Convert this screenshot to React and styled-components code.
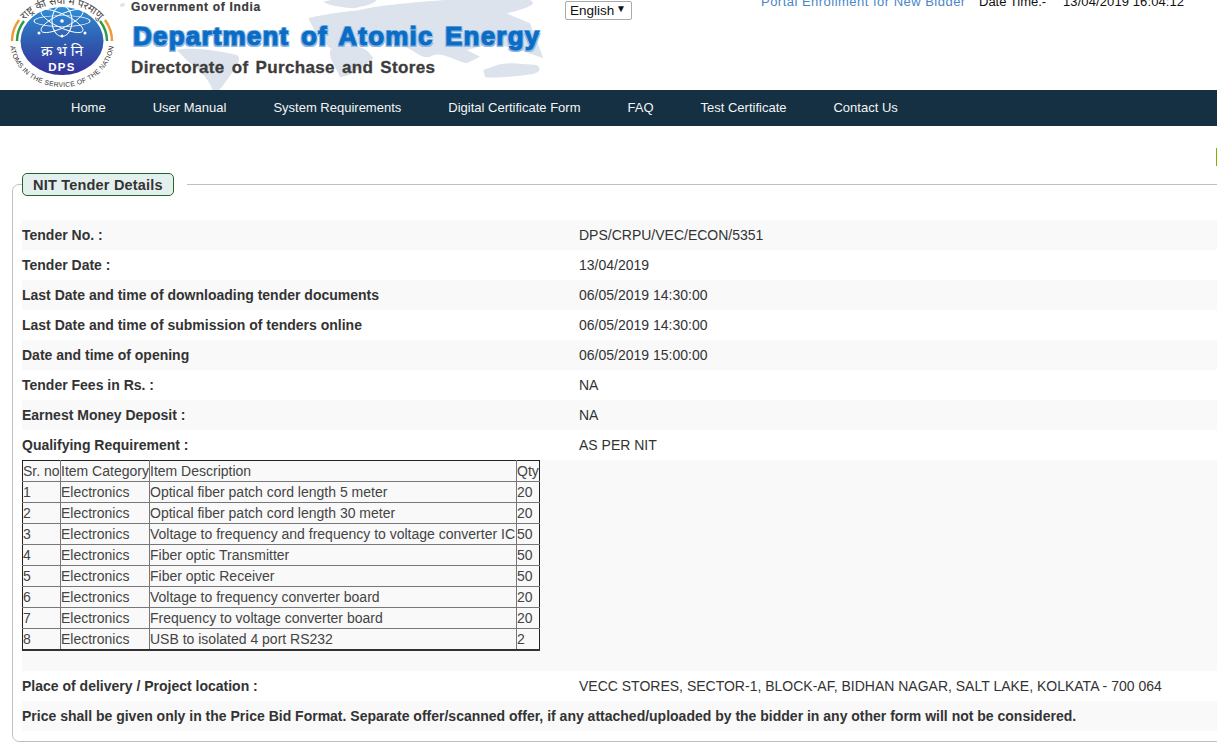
import React from 'react';
import styled, { createGlobalStyle } from 'styled-components';

const GlobalStyle = createGlobalStyle`
  html, body {
    margin: 0;
    padding: 0;
    background: #fff;
    overflow: hidden;
    height: 756px;
    font-family: "Liberation Sans", Arial, sans-serif;
  }
`;

const Header = styled.header`
  position: relative;
  display: flex;
  height: 90px;
  overflow: hidden;
`;

const MapArt = styled.svg`
  position: absolute;
  left: 120px;
  top: 0;
  z-index: 0;
`;

const Logo = styled.svg`
  flex: none;
  margin-left: 8px;
  z-index: 1;
`;

const TitleBlock = styled.div`
  flex: none;
  width: 430px;
  margin-left: 16px;
  z-index: 1;
`;

const GovLine = styled.div`
  font-size: 12px;
  font-weight: bold;
  letter-spacing: 0.7px;
  line-height: 14px;
  color: #3a3a3a;
  -webkit-text-stroke: 0.2px #3a3a3a;
`;

const DeptLine = styled.div`
  margin: 6px 0 0 2px;
  font-size: 26px;
  font-weight: bold;
  line-height: 32px;
  letter-spacing: 1.2px;
  word-spacing: 3px;
  white-space: nowrap;
  color: #0a6cc4;
  -webkit-text-stroke: 1px #0a6cc4;
  text-shadow: 1.5px 1.5px 0 #8fb9e4, -1.5px -1.5px 0 #a9cdec, 1.5px -1.5px 0 #a9cdec, -1.5px 1.5px 0 #8fb9e4;
`;

const StoreLine = styled.div`
  margin-top: 6px;
  font-size: 17px;
  font-weight: bold;
  line-height: 20px;
  letter-spacing: 0.35px;
  word-spacing: 2px;
  white-space: nowrap;
  color: #3c3c3c;
  -webkit-text-stroke: 0.3px #3c3c3c;
`;

const LangSelect = styled.div`
  flex: none;
  display: flex;
  align-items: center;
  justify-content: space-between;
  box-sizing: border-box;
  width: 67px;
  height: 19px;
  margin: 1px 0 0 4px;
  padding: 0 5px 0 4px;
  border: 1px solid #a9a9a9;
  border-radius: 2px;
  background: #fff;
  font-size: 13.5px;
  color: #111;
  z-index: 1;
  span {
    font-size: 10px;
    line-height: 1;
    margin-top: -3px;
  }
`;

const TopInfo = styled.div`
  flex: none;
  display: flex;
  margin: -6px 0 0 129px;
  font-size: 13px;
  line-height: 15px;
  white-space: nowrap;
  z-index: 1;
`;

const EnrollLink = styled.a`
  color: #4a86c8;
  letter-spacing: 0.48px;
  width: 218px;
`;

const DateLabel = styled.span`
  color: #111;
  width: 84px;
`;

const DateValue = styled.span`
  color: #111;
  letter-spacing: 0.1px;
`;

const Nav = styled.nav`
  display: flex;
  align-items: center;
  box-sizing: border-box;
  height: 36px;
  padding: 0 0 2px 47.5px;
  background: #143042;
`;

const NavItem = styled.a`
  padding: 0 23.5px;
  font-size: 13px;
  color: #f4f4f4;
  white-space: nowrap;
`;

const NoticeBar = styled.div`
  display: flex;
  justify-content: flex-end;
  height: 47px;
  padding-top: 22px;
  box-sizing: border-box;
`;

const NoticeTab = styled.div`
  width: 1px;
  height: 18px;
  background: #79b400;
`;

const Panel = styled.fieldset`
  box-sizing: border-box;
  height: 569px;
  margin: 0 -30px 0 12px;
  padding: 0 0 0 9px;
  border: 1px solid #c0c0c0;
  border-radius: 7px;
  min-width: 0;
`;

const PanelTitle = styled.legend`
  box-sizing: border-box;
  height: 23px;
  margin-right: 13px;
  padding: 1px 10px 0;
  border: 1px solid #1d6a28;
  border-radius: 5px;
  background: #e4f0ee;
  box-shadow: 13px 0 0 #fff;
  font-size: 14.5px;
  font-weight: bold;
  line-height: 20px;
  letter-spacing: 0.2px;
  color: #333;
`;

const Details = styled.div`
  margin-top: 24px;
`;

const Row = styled.div`
  display: flex;
  align-items: center;
  height: 30px;
  background: ${(p) => (p.$shade ? '#f9f9f9' : '#fff')};
  font-size: 14px;
  color: #333;
`;

const Label = styled.div`
  flex: none;
  width: 557px;
  font-weight: bold;
`;

const FullNote = styled.div`
  font-weight: bold;
`;

const TableRow = styled.div`
  height: 211px;
  background: #f9f9f9;
`;

const ItemTable = styled.table`
  border-collapse: collapse;
  table-layout: fixed;
  width: 517px;
  font-size: 14px;
  color: #444;
  th, td {
    box-sizing: border-box;
    height: 21px;
    padding: 0;
    border: 1px solid #777;
    font-weight: 400;
    text-align: left;
    white-space: nowrap;
    overflow: hidden;
  }
  th {
    border-top-color: #222;
  }
  tr > :first-child {
    border-left-color: #222;
  }
  tr > :last-child {
    border-right-color: #222;
  }
  tbody tr:last-child td {
    border-bottom: 2px solid #333;
  }
`;

const specs = [
  ['Tender No. :', 'DPS/CRPU/VEC/ECON/5351'],
  ['Tender Date :', '13/04/2019'],
  ['Last Date and time of downloading tender documents', '06/05/2019 14:30:00'],
  ['Last Date and time of submission of tenders online', '06/05/2019 14:30:00'],
  ['Date and time of opening', '06/05/2019 15:00:00'],
  ['Tender Fees in Rs. :', 'NA'],
  ['Earnest Money Deposit :', 'NA'],
  ['Qualifying Requirement :', 'AS PER NIT'],
];

const items = [
  ['1', 'Optical fiber patch cord length 5 meter', '20'],
  ['2', 'Optical fiber patch cord length 30 meter', '20'],
  ['3', 'Voltage to frequency and frequency to voltage converter IC', '50'],
  ['4', 'Fiber optic Transmitter', '50'],
  ['5', 'Fiber optic Receiver', '50'],
  ['6', 'Voltage to frequency converter board', '20'],
  ['7', 'Frequency to voltage converter board', '20'],
  ['8', 'USB to isolated 4 port RS232', '2'],
];

const navLinks = ['Home', 'User Manual', 'System Requirements', 'Digital Certificate Form', 'FAQ', 'Test Certificate', 'Contact Us'];

function WorldMap() {
  return (
    <MapArt width="440" height="92" viewBox="0 0 1320 276">
      <g fill="#dce3ec">
        <path d="M0 12 L14 8 L14 18 L2 22Z" />
        <path d="M170 150 C210 140 290 150 350 165 C370 175 345 205 325 235 C310 255 300 270 290 276 L280 276 C270 240 230 200 210 190Z" />
        <path d="M610 5 C640 -5 690 0 710 0 L770 0 C760 15 720 20 700 25 C680 22 630 20 610 5Z" />
        <path d="M565 55 C620 40 680 35 720 30 C780 15 900 5 980 0 L1230 0 C1250 10 1240 20 1160 40 L1230 70 L1270 175 L1200 150 L1120 130 L1040 150 L1080 170 L1040 190 C1000 180 960 150 930 170 C900 180 880 140 830 135 C760 120 690 130 640 150 C600 130 580 85 565 55Z" />
        <path d="M630 150 C680 125 740 135 760 175 C730 200 690 230 660 232 C650 200 625 180 630 150Z" />
        <path d="M1090 210 C1120 200 1140 188 1180 190 L1250 195 C1265 205 1260 215 1240 222 C1200 228 1130 235 1095 232Z" />
      </g>
    </MapArt>
  );
}

function LogoMark() {
  return (
    <Logo width="107" height="90" viewBox="0 0 107 90">
      <defs>
        <linearGradient id="disc" x1="0" y1="0" x2="0" y2="1">
          <stop offset="0" stopColor="#2f8fd8" />
          <stop offset="0.45" stopColor="#2f62b4" />
          <stop offset="1" stopColor="#33319a" />
        </linearGradient>
        <path id="lowerRing" d="M2 41 A52 46 0 0 0 106 41" />
        <path id="upperRing" d="M9 41 A45 37 0 0 1 99 41" />
      </defs>
      <ellipse cx="54" cy="41" rx="41.500" ry="34" fill="url(#disc)" />
      <g transform="translate(54 21) scale(1 0.55)" fill="none" stroke="#fff" strokeWidth="1.100">
        <ellipse rx="28" ry="10" />
        <ellipse rx="28" ry="10" transform="rotate(45)" />
        <ellipse rx="28" ry="10" transform="rotate(90)" />
        <ellipse rx="28" ry="10" transform="rotate(135)" />
      </g>
      <g fill="#fff">
        <circle cx="54" cy="21" r="1.800" />
        <circle cx="31" cy="33" r="1.500" />
        <circle cx="77" cy="33" r="1.500" />
        <circle cx="54" cy="36" r="1.500" />
      </g>
      <text x="54" y="56" textAnchor="middle" fontSize="15" fill="#fff" fontFamily="'Noto Sans', sans-serif">क्र भं नि</text>
      <text x="54" y="71" textAnchor="middle" fontSize="11.500" fontWeight="bold" fill="#fff" letterSpacing="1.300">DPS</text>
      <path d="M4 41 A50 41 0 0 1 11 20" fill="none" stroke="#ef9a3a" strokeWidth="2.500" />
      <path d="M9 41 A45 37 0 0 1 16 21" fill="none" stroke="#2f9a45" strokeWidth="2.500" />
      <path d="M104 41 A50 41 0 0 0 97 20" fill="none" stroke="#ef9a3a" strokeWidth="2.500" />
      <path d="M99 41 A45 37 0 0 0 92 21" fill="none" stroke="#2f9a45" strokeWidth="2.500" />
      <text fontSize="6.800" fill="#333" letterSpacing="0.300">
        <textPath href="#lowerRing" startOffset="50%" textAnchor="middle">ATOMS IN THE SERVICE OF THE NATION</textPath>
      </text>
      <text fontSize="10.500" fill="#444" fontFamily="'Noto Sans', sans-serif">
        <textPath href="#upperRing" startOffset="50%" textAnchor="middle">राष्ट्र की सेवा में परमाणु</textPath>
      </text>
    </Logo>
  );
}

function App() {
  return (
    <>
      <GlobalStyle />
      <Header>
        <WorldMap />
        <LogoMark />
        <TitleBlock>
          <GovLine>Government of India</GovLine>
          <DeptLine>Department of Atomic Energy</DeptLine>
          <StoreLine>Directorate of Purchase and Stores</StoreLine>
        </TitleBlock>
        <LangSelect>English <span>▼</span></LangSelect>
        <TopInfo>
          <EnrollLink>Portal Enrollment for New Bidder</EnrollLink>
          <DateLabel>Date Time.-</DateLabel>
          <DateValue>13/04/2019 16:04:12</DateValue>
        </TopInfo>
      </Header>
      <Nav>
        {navLinks.map((link) => (
          <NavItem key={link}>{link}</NavItem>
        ))}
      </Nav>
      <NoticeBar>
        <NoticeTab />
      </NoticeBar>
      <Panel>
        <PanelTitle>NIT Tender Details</PanelTitle>
        <Details>
          {specs.map(([label, value], i) => (
            <Row key={label} $shade={i % 2 === 0}>
              <Label>{label}</Label>
              <div>{value}</div>
            </Row>
          ))}
          <TableRow>
            <ItemTable>
              <colgroup>
                <col style={{ width: 38 }} />
                <col style={{ width: 89 }} />
                <col style={{ width: 367 }} />
                <col style={{ width: 23 }} />
              </colgroup>
              <thead>
                <tr>
                  <th>Sr. no</th>
                  <th>Item Category</th>
                  <th>Item Description</th>
                  <th>Qty</th>
                </tr>
              </thead>
              <tbody>
                {items.map(([no, desc, qty]) => (
                  <tr key={no}>
                    <td>{no}</td>
                    <td>Electronics</td>
                    <td>{desc}</td>
                    <td>{qty}</td>
                  </tr>
                ))}
              </tbody>
            </ItemTable>
          </TableRow>
          <Row>
            <Label>Place of delivery / Project location :</Label>
            <div>VECC STORES, SECTOR-1, BLOCK-AF, BIDHAN NAGAR, SALT LAKE, KOLKATA - 700 064</div>
          </Row>
          <Row $shade>
            <FullNote>Price shall be given only in the Price Bid Format. Separate offer/scanned offer, if any attached/uploaded by the bidder in any other form will not be considered.</FullNote>
          </Row>
        </Details>
      </Panel>
    </>
  );
}

export default App;
